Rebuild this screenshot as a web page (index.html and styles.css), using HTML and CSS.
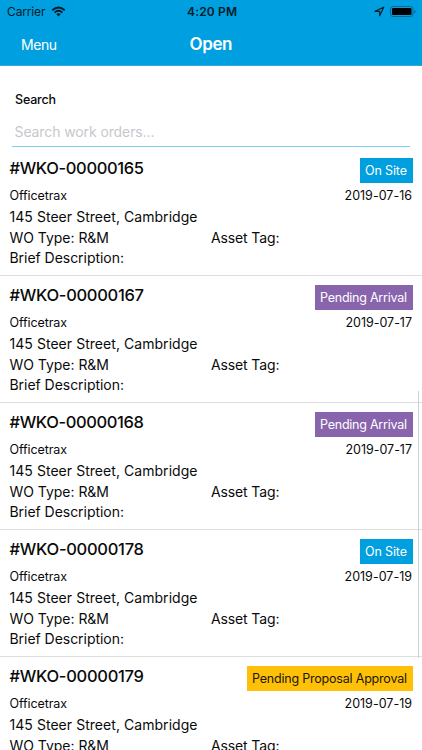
FILE: index.html
```
<!DOCTYPE html>
<html lang="en"><head><meta charset="utf-8"><title>Open work orders</title><link rel="stylesheet" href="styles.css"></head>
<body>
<header class="header">
<div class="status"><span class="carrier"><span class="t" data-w="38.5">Carrier</span>
<svg class="wifi" width="15" height="11" viewBox="0 0 14 11"><path d="M.7 4.2Q7-1.4 13.3 4.2M3.1 6.6Q7 3.1 10.9 6.6" fill="none" stroke="#001c28" stroke-width="1.9"/><path d="M4.7 8.1Q7 6.2 9.3 8.1L7 10.5z" fill="#001c28"/></svg></span>
<span class="time"><span class="t" data-w="50">4:20 PM</span></span>
<span class="power"><svg width="11" height="11" viewBox="0 0 11 11"><path d="M1 5.3 9.7 1.2 5.7 9.8V5.3z" fill="none" stroke="#00202d" stroke-width="1.2" stroke-linejoin="round"/></svg>
<svg width="27" height="11" viewBox="0 0 27 11"><rect x=".5" y=".5" width="22.5" height="10" rx="2.5" fill="none" stroke="#056a94"/><rect x="2" y="2" width="19.5" height="7" rx="1"/><path d="M24.3 3.7q1.5.4 1.5 1.8t-1.5 1.8z" fill="#056a94"/></svg></span></div>
<nav class="nav"><a class="menu"><span class="t" data-w="36">Menu</span></a><h1><span class="t" data-w="43">Open</span></h1><span></span></nav>
</header>
<section class="search"><label><span class="t" data-w="41">Search</span></label><div class="field"><span class="t" data-w="140">Search work orders...</span></div></section>
<main id="orders"></main>
<i class="scrollbar"></i>
<script src="script.js"></script>
</body></html>
```
FILE: styles.css
```
*{box-sizing:border-box}
body{margin:0;width:422px;height:750px;overflow:hidden;background:#fff;color:#0a0a0a;font-family:Inter,sans-serif;position:relative}
.header{height:66px;background:#009fdf;border-bottom:1px solid #2eaadd}
.status{height:22px;display:grid;grid-template-columns:1fr auto 1fr;align-items:center;font-size:12px;padding:0 5px 0 7px;color:#001c28}
.carrier,.power{display:flex;align-items:center;gap:5px}
.power{justify-content:flex-end}
.time{font-weight:600}
.nav{height:44px;display:grid;grid-template-columns:1fr auto 1fr;align-items:center;color:#fff;padding:0 21px}
.menu{font-size:14px}
h1{font-size:17px;font-weight:600;margin:0}
.t{white-space:nowrap;display:inline-block}
.search{height:83px;padding:25px 12px 0}
.search label{display:block;font-size:12.5px;font-weight:500;line-height:18px;padding-left:3px}
.field{height:38px;border-bottom:1px solid #7fcdf0;font-size:14px;line-height:20px;padding:13px 0 0 2.5px;color:#c7c7cc}
.order{height:127px;border-bottom:1px solid #dedede;padding:9px 9px 0 9.5px}
.row{display:flex;justify-content:space-between}
.top{height:29px}
.top strong{font-size:16.5px;font-weight:500;line-height:20px}
.badge{height:25px;line-height:26px;color:#fff;font-size:12.5px;padding:0 6px 0 5px;background:#009fdf}
.pending{background:#8864ac}
.approval{background:#ffc107;color:#1c1606}
.company{height:18px;line-height:18px;font-size:12.5px;padding-right:1px}
.line{font-size:14px;line-height:20px}
.address{height:23px;line-height:23px}
.types{height:20px;display:grid;grid-template-columns:201.5px 1fr}
.scrollbar{position:absolute;right:3px;top:391px;width:1px;height:267px;background:#cfcfcf}
```
FILE: script.js
```
const orders=[['165','On Site','','2019-07-16',42,67.5],['167','Pending Arrival','pending','2019-07-17',87,66.5],['168','Pending Arrival','pending','2019-07-17',87,66.5],['178','On Site','','2019-07-19',42,67.5],['179','Pending Proposal Approval','approval','2019-07-19',155,67.5]];
const t=(s,w)=>`<span class="t" data-w="${w}">${s}</span>`;
document.getElementById('orders').innerHTML=orders.map(o=>`<article class="order"><div class="row top"><strong>${t('#WKO-00000'+o[0],134.5)}</strong><span class="badge ${o[2]}">${t(o[1],o[4])}</span></div><div class="row company">${t('Officetrax',57.5)}${t(o[3],o[5])}</div><div class="line address">${t('145 Steer Street, Cambridge',188)}</div><div class="line types"><span>${t('WO Type: R&amp;M',99.5)}</span><span>${t('Asset Tag:',68.5)}</span></div><div class="line">${t('Brief Description:',114.5)}</div></article>`).join('');
document.querySelectorAll('.t').forEach(e=>{const n=e.textContent.length;const d=(+e.dataset.w-e.getBoundingClientRect().width)/(n-1);e.style.letterSpacing=d+'px';e.style.marginRight=-d+'px'});
```
